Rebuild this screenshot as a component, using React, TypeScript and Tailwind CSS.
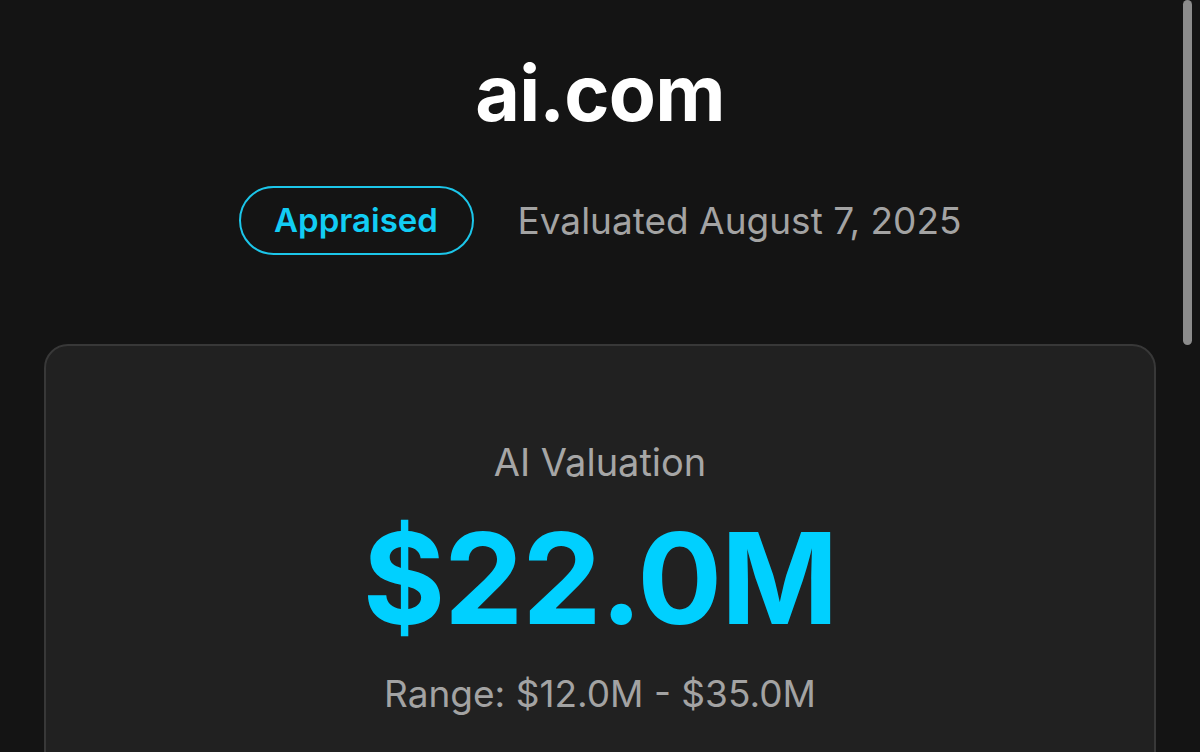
export default function App() {
  return (
    <div
      className="relative min-h-[752px] w-full overflow-hidden bg-[#141414] text-white"
      style={{ fontFamily: "Inter, 'Noto Sans', sans-serif" }}
    >
      <div className="flex flex-col items-center pt-[45px]">
        <h1 className="text-[77px] font-bold leading-[96px] tracking-[-0.01em]">ai.com</h1>

        <div className="mt-[45px] flex items-center gap-[44px]">
          <span className="flex h-[69px] w-[235px] items-center justify-center rounded-full border-2 border-[#1cc6ea] text-[33px] font-semibold text-[#12cdf4]">
            Appraised
          </span>
          <span className="text-[37px] text-[#a3a3a3]">Evaluated August 7, 2025</span>
        </div>
      </div>

      <section className="mx-[44px] mt-[89px] flex flex-col items-center rounded-[24px] border-2 border-[#383838] bg-[#212121] pb-[60px] pt-[92px]">
        <p className="text-[38px] leading-[48px] text-[#a6a6a6]">AI Valuation</p>
        <p className="mt-[22px] text-[126px] font-bold leading-[140px] tracking-[-0.01em] text-[#00d0ff]">
          $22.0M
        </p>
        <p className="mt-[24px] text-[37px] leading-[44px] text-[#a3a3a3]">Range: $12.0M - $35.0M</p>
      </section>

      <div className="absolute right-[8px] top-0 h-[345px] w-[9px] rounded-full bg-[#8c8c8c]" />
    </div>
  );
}
